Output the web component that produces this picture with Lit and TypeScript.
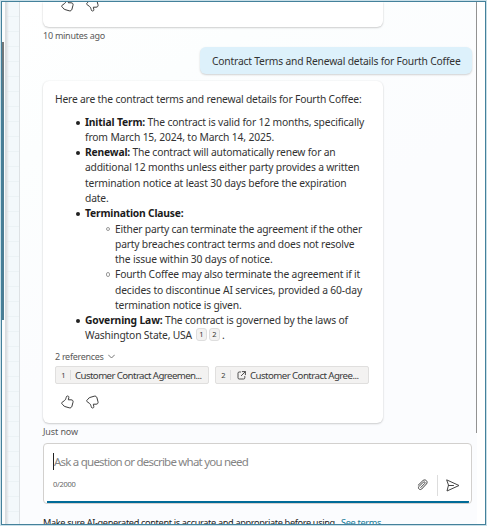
import { LitElement, html, css, svg } from "lit";
import { customElement, property } from "lit/decorators.js";

const thumb = svg`<path d="M5.9 1.2C6.9.4 8 1.2 7.8 2.6L7.3 4.8H10C11.6 4.8 12.4 5.9 12 7.2L11 11C10.7 12.5 9.6 13.2 8.2 12.8L3.8 11.5C3 11.3 2.5 10.8 2.3 10L1.2 9.2C.5 8.7.5 7.8 1.1 7.3L3.5 5.6C4.7 4.8 5 2.8 5.4 1.8Z"/>`;

/** One line of copy whose tracking is adjusted to fill a given measure. */
@customElement("text-line")
export class TextLine extends LitElement {
  @property({ type: Number }) measure = 0;
  static styles = css`
    :host { display: block; white-space: pre; width: max-content; }
  `;
  firstUpdated() {
    const count = (this.textContent ?? "").length;
    const natural = this.getBoundingClientRect().width;
    if (this.measure && count) {
      this.style.letterSpacing = `${(this.measure - natural) / count}px`;
    }
  }
  render() {
    return html`<slot></slot>`;
  }
}

@customElement("app-root")
export class AppRoot extends LitElement {
  static styles = css`
    :host {
      display: block;
      width: 487px;
      height: 526px;
      font-family: "Noto Sans", "Open Sans", sans-serif;
      font-size: 10.3px;
      line-height: 15.27px;
      color: #333;
    }
    * { box-sizing: border-box; }
    svg { display: block; fill: none; stroke: #3c3c3c; stroke-width: 1; stroke-linejoin: round; stroke-linecap: round; }
    .frame {
      width: 487px;
      height: 526px;
      padding: 1px;
      background: #c9dfe8;
    }
    .window {
      display: flex;
      width: 485px;
      height: 524px;
      border: 1px solid #44819b;
      background: #fff;
      overflow: hidden;
    }
    .gutter { width: 4px; flex: none; padding-top: 40px; background: #fbfcfc; border-right: 1px solid #d8dcdf; }
    .thumbbar { width: 2px; height: 278px; background: linear-gradient(#777, #4c7d94 30%, #4c7d94); }
    .grid {
      width: 14px;
      flex: none;
      border-right: 1px solid #dde1e4;
      background: linear-gradient(90deg, #d9dcde, transparent 3px), repeating-linear-gradient(#f3f8fb 0 14px, #ebf2f5 14px 15px);
    }
    .pane {
      flex: none;
      width: 457px;
      padding-left: 23px;
      background: linear-gradient(150deg, #fff 0, #fcfefe 20%, #fbfcfe 50%, #fbfcfe);
    }
    .scroll { height: 431px; width: 434px; border-right: 1.5px solid #929292; }
    .card {
      width: 339.5px;
      background: #fff;
      border-radius: 6px;
      box-shadow: 0 1px 2px #0000002e, 0 0 2px #00000012;
    }
    .previous { height: 25px; padding: 0 0 0 18px; border-radius: 0 0 6px 6px; overflow: hidden; }
    .previous .votes { margin-top: -4px; }
    .votes { display: flex; gap: 12px; }
    .flip { transform: scaleY(-1); }
    .stamp { font-size: 9px; line-height: 15px; height: 20px; padding-top: 1px; color: #5a5a5a; }
    .bubble {
      width: 272px;
      height: 27px;
      margin-left: 157px;
      padding: 7px 12px;
      border-radius: 6px;
      background: #ddf1fb;
      box-shadow: 0 1px 2px #0000002e;
    }
    .answer { margin-top: 7px; height: 342px; padding: 11px 12px 0; }
    .items { margin: 7.4px 0 0; padding: 0 0 0 30px; list-style: none; }
    .item { position: relative; }
    .item::before {
      content: "";
      position: absolute;
      left: -9px;
      top: 6px;
      width: 4px;
      height: 4px;
      border-radius: 50%;
      background: #222;
    }
    .sub { margin: 0; padding: 0 0 0 30px; list-style: none; }
    .sub .item::before { background: none; border: .8px solid #999; width: 4.4px; height: 4.4px; top: 5px; box-sizing: border-box; }
    b { color: #1b1b1b; }
    .cite { display: flex; height: 15.27px; }
    .mark {
      width: 11px;
      height: 13px;
      margin: 0 2px 0 0;
      border: 1px solid #dedede;
      border-radius: 3px;
      background: #f3f2f1;
      font-size: 7.5px;
      line-height: 11px;
      text-align: center;
    }
    .first { margin-left: 4px; }
    .refs { display: flex; align-items: center; gap: 4px; height: 14px; margin-top: 5.5px; font-size: 9px; color: #5a5a5a; }
    .refs svg { stroke: #666; stroke-width: .9; }
    .sources { display: flex; gap: 6px; margin-top: 3px; }
    .source {
      display: flex;
      align-items: center;
      width: 154px;
      height: 18px;
      border: 1px solid #e0dfde;
      border-radius: 2px;
      background: #f3f2f1;
      font-size: 9.7px;
      color: #3a3a3a;
    }
    .num { width: 15px; padding-left: 1px; border-right: 1px solid #dedede; font-size: 7.5px; line-height: 10px; text-align: center; }
    .source text-line { margin-left: 4px; padding-top: 1px; }
    .source svg { margin-left: 6px; stroke-width: .9; }
    .source svg + text-line { margin-left: 4px; }
    .answer .votes { margin: 11px 0 0 6px; }
    .now { margin-top: 0; }
    .composer {
      display: flex;
      flex-direction: column;
      width: 429px;
      height: 61px;
      margin-top: 10px;
      padding: 9px 9px 0;
      border: 1px solid #d2d0ce;
      border-radius: 4px;
      background: linear-gradient(#006b98, #006b98) 3px 100% / 422px 2.2px no-repeat #fff;
    }
    .prompt { height: 17px; border-left: 1px solid #222; font-size: 11.5px; line-height: 17px; color: #858585; }
    .tools { display: flex; align-items: center; height: 22px; margin-top: 4px; }
    .count { flex: 1; margin-top: -2px; font-size: 7.5px; line-height: 10px; color: #666; }
    .tools svg { flex: none; stroke: #444; }
    .split { width: 1px; height: 21px; margin: 0 8px 0 9px; background: #ddd; }
    .end { width: 2px; }
    .note { display: flex; gap: 4px; margin-top: 10px; font-size: 9.2px; line-height: 17px; color: #222; }
    .link { color: #177b99; }
  `;

  private votes() {
    return html`<div class="votes">
      <svg width="13" height="14" viewBox="0 0 13 14">${thumb}</svg>
      <svg class="flip" width="13" height="14" viewBox="0 0 13 14">${thumb}</svg>
    </div>`;
  }

  render() {
    return html`<div class="frame"><div class="window">
      <div class="gutter"><div class="thumbbar"></div></div>
      <div class="grid"></div>
      <div class="pane">
        <div class="scroll">
          <div class="card previous">${this.votes()}</div>
          <div class="stamp"><text-line measure="62">10 minutes ago</text-line></div>
          <div class="bubble"><text-line measure="248.5">Contract Terms and Renewal details for Fourth Coffee</text-line></div>
          <div class="card answer">
            <text-line measure="306.5">Here are the contract terms and renewal details for Fourth Coffee:</text-line>
            <ul class="items">
              <li class="item">
                <text-line measure="279"><b>Initial Term:</b> The contract is valid for 12 months, specifically</text-line>
                <text-line measure="189">from March 15, 2024, to March 14, 2025.</text-line>
              </li>
              <li class="item">
                <text-line measure="250.5"><b>Renewal:</b> The contract will automatically renew for an</text-line>
                <text-line measure="274.5">additional 12 months unless either party provides a written</text-line>
                <text-line measure="261.5">termination notice at least 30 days before the expiration</text-line>
                <text-line measure="23.5">date.</text-line>
              </li>
              <li class="item">
                <text-line measure="98.5"><b>Termination Clause:</b></text-line>
                <ul class="sub">
                  <li class="item">
                    <text-line measure="247">Either party can terminate the agreement if the other</text-line>
                    <text-line measure="239.5">party breaches contract terms and does not resolve</text-line>
                    <text-line measure="157.5">the issue within 30 days of notice.</text-line>
                  </li>
                  <li class="item">
                    <text-line measure="245">Fourth Coffee may also terminate the agreement if it</text-line>
                    <text-line measure="247">decides to discontinue AI services, provided a 60-day</text-line>
                    <text-line measure="126.5">termination notice is given.</text-line>
                  </li>
                </ul>
              </li>
              <li class="item">
                <text-line measure="263"><b>Governing Law:</b> The contract is governed by the laws of</text-line>
                <div class="cite"><text-line measure="107">Washington State, USA</text-line><span class="mark first">1</span><span class="mark">2</span><span>.</span></div>
              </li>
            </ul>
            <div class="refs"><text-line measure="48.5">2 references</text-line><svg width="7" height="5" viewBox="0 0 7 5"><path d="M.5 1 3.5 4 6.5 1"/></svg></div>
            <div class="sources">
              <div class="source"><span class="num">1</span><text-line measure="126.5">Customer Contract Agreemen...</text-line></div>
              <div class="source"><span class="num">2</span><svg width="9" height="9" viewBox="0 0 9 9"><path d="M3.5 1H2.2Q1 1 1 2.2V6.8Q1 8 2.2 8H6.6Q7.8 8 7.8 6.8V5.5M5.3.6H8.4V3.7M8.2.8 4.3 4.7"/></svg><text-line measure="108.5">Customer Contract Agree...</text-line></div>
            </div>
            ${this.votes()}
          </div>
          <div class="stamp now"><text-line measure="35">Just now</text-line></div>
        </div>
        <div class="composer">
          <div class="prompt"><text-line measure="194">Ask a question or describe what you need</text-line></div>
          <div class="tools">
            <div class="count"><text-line measure="22.5">0/2000</text-line></div>
            <svg width="11" height="12" viewBox="0 0 11 12"><path d="M1.2 6.2 5.9 1.6C8.4-.5 11.5 2.7 9.4 5L4.7 10C3 11.6.4 9.4 1.9 7.6L6.4 3.1C7.5 2.2 8.6 3.4 7.8 4.4L3.8 8.5"/></svg>
            <div class="split"></div>
            <svg width="14" height="13" viewBox="0 0 14 13"><path d="M1 1 13 6.5 1 12 2.4 6.5ZM2.4 6.5H7.5"/></svg>
            <span class="end"></span>
          </div>
        </div>
        <div class="note"><text-line measure="294">Make sure AI-generated content is accurate and appropriate before using.</text-line><text-line class="link" measure="40">See terms</text-line></div>
      </div>
    </div></div>`;
  }
}
